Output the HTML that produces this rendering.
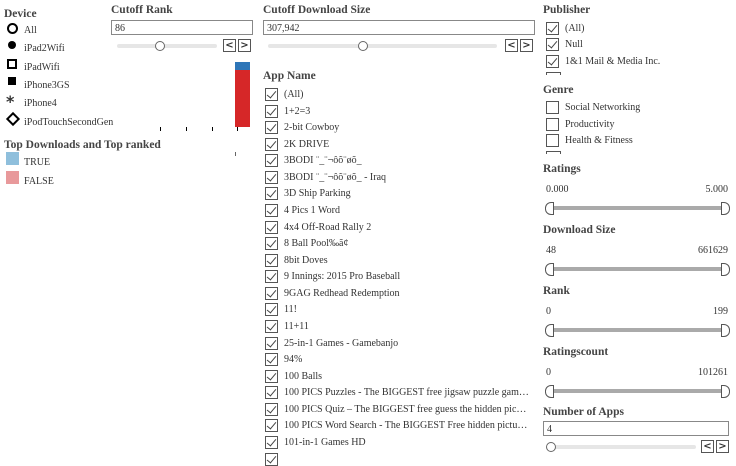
<!DOCTYPE html><html><head><style>
body{margin:0;width:736px;height:454px;overflow:hidden;background:#fff;font-family:"Liberation Serif",serif;color:#333;position:relative}
.a{position:absolute;white-space:nowrap}
.t{font-weight:bold;font-size:11.5px;color:#444}
.s{font-size:10px;color:#333}
.cb{position:absolute;width:11px;height:11px;border:1px solid #555;background:#fff}
.cb.c::after{content:"";position:absolute;left:3px;top:0px;width:4px;height:8px;border:solid #444;border-width:0 1.2px 1.2px 0;transform:rotate(40deg)}
.inp{position:absolute;border:1px solid #888;height:15px;font-size:10px;line-height:15px;padding-left:3px;box-sizing:border-box}
.trk{position:absolute;height:4px;background:#e6e6e6;border-radius:2px}
.knob{position:absolute;width:8px;height:8px;border:1px solid #666;border-radius:50%;background:#fff}
.btn{position:absolute;width:11px;height:11px;border:1px solid #555;font-size:10px;line-height:11px;text-align:center;font-weight:bold;color:#333;font-family:"DejaVu Sans",sans-serif}
.rb{position:absolute;height:4px;background:#aaa;left:550px;width:176px}
.hl,.hr{position:absolute;width:7px;height:11px;border:1px solid #555;background:#fff}
.hl{border-radius:6px 0 0 6px}.hr{border-radius:0 6px 6px 0}
</style></head><body>
<div class="a t" style="left:4px;top:8px">Device</div>
<div class="a" style="left:7px;top:23px;width:7px;height:7px;border:2px solid #000;border-radius:50%"></div>
<div class="a s" style="left:24px;top:25px">All</div>
<div class="a" style="left:8px;top:41px;width:8px;height:8px;background:#000;border-radius:50%"></div>
<div class="a s" style="left:24px;top:43px">iPad2Wifi</div>
<div class="a" style="left:7px;top:59px;width:6px;height:6px;border:2px solid #000"></div>
<div class="a s" style="left:24px;top:62px">iPadWifi</div>
<div class="a" style="left:8px;top:77px;width:8px;height:8px;background:#000"></div>
<div class="a s" style="left:24px;top:80px">iPhone3GS</div>
<div class="a" style="left:6px;top:92px;font-size:16px;font-weight:bold;font-family:'DejaVu Sans'">*</div>
<div class="a s" style="left:24px;top:98px">iPhone4</div>
<div class="a" style="left:8px;top:114px;width:6px;height:6px;border:2px solid #000;transform:rotate(45deg)"></div>
<div class="a s" style="left:24px;top:117px">iPodTouchSecondGen</div>
<div class="a t" style="left:4px;top:139px">Top Downloads and Top ranked</div>
<div class="a" style="left:6px;top:152px;width:13px;height:13px;background:#8fbfdc"></div>
<div class="a s" style="left:24px;top:157px">TRUE</div>
<div class="a" style="left:6px;top:171px;width:13px;height:13px;background:#e8999b"></div>
<div class="a s" style="left:24px;top:176px">FALSE</div>

<div class="a t" style="left:111px;top:4px">Cutoff Rank</div>
<div class="inp" style="left:111px;top:20px;width:142px">86</div>
<div class="trk" style="left:117px;top:44px;width:100px"></div>
<div class="knob" style="left:155px;top:41px"></div>
<div class="btn" style="left:223px;top:39px">&lt;</div><div class="btn" style="left:238px;top:39px">&gt;</div>
<div class="a" style="left:235px;top:62px;width:15px;height:65px;background:#d62728"></div>
<div class="a" style="left:235px;top:62px;width:15px;height:8px;background:#2e76b8"></div>
<div class="a" style="left:160px;top:127px;width:1px;height:4px;background:#000"></div>
<div class="a" style="left:186px;top:127px;width:1px;height:4px;background:#000"></div>
<div class="a" style="left:212px;top:127px;width:1px;height:4px;background:#000"></div>
<div class="a" style="left:237px;top:127px;width:1px;height:4px;background:#000"></div>
<div class="a" style="left:235px;top:152px;width:1px;height:4px;background:#666"></div>

<div class="a t" style="left:263px;top:4px">Cutoff Download Size</div>
<div class="inp" style="left:263px;top:20px;width:272px">307,942</div>
<div class="trk" style="left:268px;top:44px;width:229px"></div>
<div class="knob" style="left:358px;top:41px"></div>
<div class="btn" style="left:505px;top:39px">&lt;</div><div class="btn" style="left:520px;top:39px">&gt;</div>

<div class="a t" style="left:263px;top:70px">App Name</div>
<div id="list"></div>

<div class="a t" style="left:543px;top:4px">Publisher</div>
<div class="cb c" style="left:546px;top:22px"></div><div class="a s" style="left:565px;top:23px">(All)</div>
<div class="cb c" style="left:546px;top:38px"></div><div class="a s" style="left:565px;top:39px">Null</div>
<div class="cb c" style="left:546px;top:55px"></div><div class="a s" style="left:565px;top:56px">1&amp;1 Mail &amp; Media Inc.</div>
<div class="a" style="left:546px;top:72px;width:13px;height:2px;border:1px solid #555;border-bottom:0"></div>
<div class="a t" style="left:543px;top:84px">Genre</div>
<div class="cb" style="left:546px;top:101px"></div><div class="a s" style="left:565px;top:102px">Social Networking</div>
<div class="cb" style="left:546px;top:118px"></div><div class="a s" style="left:565px;top:119px">Productivity</div>
<div class="cb" style="left:546px;top:134px"></div><div class="a s" style="left:565px;top:135px">Health &amp; Fitness</div>
<div class="a" style="left:546px;top:151px;width:13px;height:2px;border:1px solid #555;border-bottom:0"></div>

<div class="a t" style="left:543px;top:163px">Ratings</div>
<div class="a s" style="left:546px;top:184px">0.000</div><div class="a s" style="right:8px;top:184px">5.000</div>
<div class="rb" style="top:206px"></div><div class="hl" style="left:545px;top:202px"></div><div class="hr" style="left:721px;top:202px"></div>
<div class="a t" style="left:543px;top:224px">Download Size</div>
<div class="a s" style="left:546px;top:245px">48</div><div class="a s" style="right:8px;top:245px">661629</div>
<div class="rb" style="top:267px"></div><div class="hl" style="left:545px;top:263px"></div><div class="hr" style="left:721px;top:263px"></div>
<div class="a t" style="left:543px;top:285px">Rank</div>
<div class="a s" style="left:546px;top:306px">0</div><div class="a s" style="right:8px;top:306px">199</div>
<div class="rb" style="top:328px"></div><div class="hl" style="left:545px;top:324px"></div><div class="hr" style="left:721px;top:324px"></div>
<div class="a t" style="left:543px;top:346px">Ratingscount</div>
<div class="a s" style="left:546px;top:367px">0</div><div class="a s" style="right:8px;top:367px">101261</div>
<div class="rb" style="top:389px"></div><div class="hl" style="left:545px;top:385px"></div><div class="hr" style="left:721px;top:385px"></div>
<div class="a t" style="left:543px;top:406px">Number of Apps</div>
<div class="inp" style="left:543px;top:421px;width:186px">4</div>
<div class="trk" style="left:548px;top:445px;width:148px"></div>
<div class="knob" style="left:546px;top:442px"></div>
<div class="btn" style="left:701px;top:440px">&lt;</div><div class="btn" style="left:716px;top:440px">&gt;</div>
<script>
var items=["(All)","1+2=3","2-bit Cowboy","2K DRIVE","3BODI ¨_¨¬ôõ¨øõ_","3BODI ¨_¨¬ôõ¨øõ_ - Iraq","3D Ship Parking","4 Pics 1 Word","4x4 Off-Road Rally 2","8 Ball Pool‰ã¢","8bit Doves","9 Innings: 2015 Pro Baseball","9GAG Redhead Redemption","11!","11+11","25-in-1 Games - Gamebanjo","94%","100 Balls","100 PICS Puzzles - The BIGGEST free jigsaw puzzle gam…","100 PICS Quiz – The BIGGEST free guess the hidden pic…","100 PICS Word Search - The BIGGEST Free hidden pictu…","101-in-1 Games HD",""];
var h="";items.forEach(function(t,i){var y=88+i*16.57;h+='<div class="cb c" style="left:265px;top:'+y+'px"></div><div class="a s" style="left:284px;top:'+(y+1)+'px">'+t+'</div>';});
document.getElementById("list").innerHTML=h;
</script>
</body></html>
